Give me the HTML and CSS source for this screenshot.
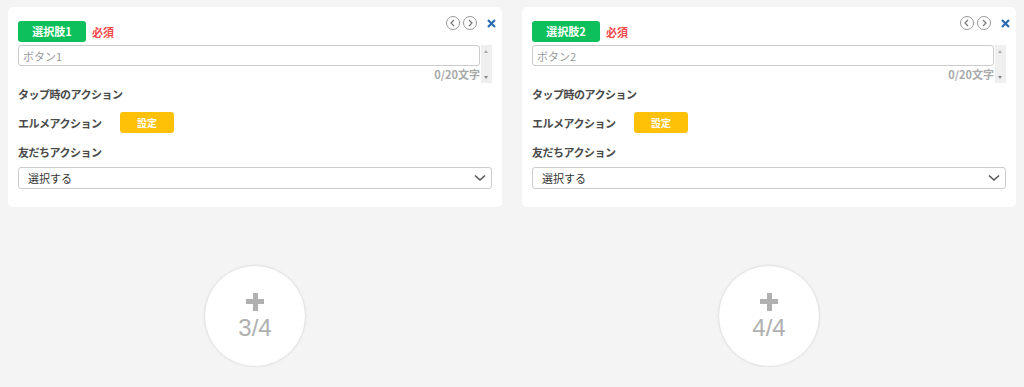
FILE: index.html
```html
<!DOCTYPE html>
<html lang="ja">
<head>
    <meta charset="UTF-8">
    <meta name="viewport" content="width=device-width, initial-scale=1.0">
    <title>選択肢ボタン</title>
    <link rel="stylesheet" href="styles.css">
</head>
<body>
    <div class="columns">
        <!-- Choice 1 -->
        <div class="column">
            <div class="card">
                <div class="tools">
                    <span class="nav-btn">
                        <svg width="10" height="10" viewBox="0 0 10 10"><path d="M6 2 L3 5 L6 8" fill="none" stroke="#777" stroke-width="1.2"/></svg>
                    </span>
                    <span class="nav-btn">
                        <svg width="10" height="10" viewBox="0 0 10 10"><path d="M4 2 L7 5 L4 8" fill="none" stroke="#777" stroke-width="1.2"/></svg>
                    </span>
                    <span class="close-btn">
                        <svg width="9" height="9" viewBox="0 0 9 9"><path d="M1 1 L8 8 M8 1 L1 8" stroke="#2b6cb0" stroke-width="2.2"/></svg>
                    </span>
                </div>
                <div class="badge-row">
                    <span class="badge">選択肢1</span>
                    <span class="required">必須</span>
                </div>
                <div class="text-row">
                    <div class="text-main">
                        <input class="text-input" type="text" placeholder="ボタン1">
                        <div class="counter">0/20文字</div>
                    </div>
                    <div class="scroll">
                        <span class="arrow-up"></span>
                        <span class="arrow-down"></span>
                    </div>
                </div>
                <div class="label label-tap">タップ時のアクション</div>
                <div class="action-row">
                    <span class="label action-name">エルメアクション</span>
                    <button class="set-btn">設定</button>
                </div>
                <div class="label label-friend">友だちアクション</div>
                <div class="select">
                    <span>選択する</span>
                    <svg width="12" height="8" viewBox="0 0 12 8"><path d="M1 1.5 L6 6 L11 1.5" fill="none" stroke="#555" stroke-width="1.6"/></svg>
                </div>
            </div>
            <div class="add-circle">
                <span class="plus"></span>
                <span class="count">3/4</span>
            </div>
        </div>

        <!-- Choice 2 -->
        <div class="column">
            <div class="card">
                <div class="tools">
                    <span class="nav-btn">
                        <svg width="10" height="10" viewBox="0 0 10 10"><path d="M6 2 L3 5 L6 8" fill="none" stroke="#777" stroke-width="1.2"/></svg>
                    </span>
                    <span class="nav-btn">
                        <svg width="10" height="10" viewBox="0 0 10 10"><path d="M4 2 L7 5 L4 8" fill="none" stroke="#777" stroke-width="1.2"/></svg>
                    </span>
                    <span class="close-btn">
                        <svg width="9" height="9" viewBox="0 0 9 9"><path d="M1 1 L8 8 M8 1 L1 8" stroke="#2b6cb0" stroke-width="2.2"/></svg>
                    </span>
                </div>
                <div class="badge-row">
                    <span class="badge">選択肢2</span>
                    <span class="required">必須</span>
                </div>
                <div class="text-row">
                    <div class="text-main">
                        <input class="text-input" type="text" placeholder="ボタン2">
                        <div class="counter">0/20文字</div>
                    </div>
                    <div class="scroll">
                        <span class="arrow-up"></span>
                        <span class="arrow-down"></span>
                    </div>
                </div>
                <div class="label label-tap">タップ時のアクション</div>
                <div class="action-row">
                    <span class="label action-name">エルメアクション</span>
                    <button class="set-btn">設定</button>
                </div>
                <div class="label label-friend">友だちアクション</div>
                <div class="select">
                    <span>選択する</span>
                    <svg width="12" height="8" viewBox="0 0 12 8"><path d="M1 1.5 L6 6 L11 1.5" fill="none" stroke="#555" stroke-width="1.6"/></svg>
                </div>
            </div>
            <div class="add-circle">
                <span class="plus"></span>
                <span class="count">4/4</span>
            </div>
        </div>
    </div>
</body>
</html>
```

FILE: styles.css
```css
/* Choice editor */
body {
    margin: 0;
    padding: 7px 8px 0 8px;
    background-color: #f4f4f4;
    font-family: "Noto Sans CJK JP", "Noto Sans", sans-serif;
    color: #444;
}
.columns {
    display: grid;
    grid-template-columns: 494px 494px;
    column-gap: 20px;
}
.column {
    display: flex;
    flex-direction: column;
    align-items: center;
}
.card {
    position: relative;
    box-sizing: border-box;
    width: 100%;
    background-color: #fff;
    border-radius: 5px;
    padding: 14px 10px 18px 10px;
}
.tools {
    position: absolute;
    top: 9px;
    right: 6px;
    display: flex;
    align-items: center;
    gap: 3px;
}
.nav-btn {
    box-sizing: border-box;
    width: 14px;
    height: 14px;
    border: 1px solid #999;
    border-radius: 50%;
    display: flex;
    align-items: center;
    justify-content: center;
}
.close-btn {
    display: flex;
    margin-left: 7px;
}
.badge-row {
    display: flex;
    align-items: center;
    height: 21px;
}
.badge {
    width: 68px;
    height: 21px;
    line-height: 21px;
    border-radius: 3px;
    background-color: #0ec05c;
    color: #fff;
    font-size: 11px;
    font-weight: bold;
    text-align: center;
}
.required {
    margin-left: 6px;
    color: #f04a4a;
    font-size: 11px;
    font-weight: bold;
}
.text-row {
    display: flex;
    margin-top: 3px;
    gap: 1px;
}
.text-main {
    flex: 1;
}
.text-input {
    box-sizing: border-box;
    display: block;
    width: 100%;
    height: 21px;
    margin: 0;
    padding: 0 4px;
    border: 1px solid #ccc;
    border-radius: 3px;
    font-family: inherit;
    font-size: 11px;
    outline: none;
}
.text-input::placeholder {
    color: #999;
}
.counter {
    height: 17px;
    line-height: 17px;
    text-align: right;
    font-size: 11px;
    font-weight: bold;
    color: #aaa;
}
.scroll {
    position: relative;
    width: 11px;
    height: 38px;
    background-color: #efefef;
}
.arrow-up,
.arrow-down {
    position: absolute;
    left: 3px;
    width: 0;
    height: 0;
    border-left: 2.5px solid transparent;
    border-right: 2.5px solid transparent;
}
.arrow-up {
    top: 5px;
    border-bottom: 3px solid #aaa;
}
.arrow-down {
    bottom: 4px;
    border-top: 3px solid #888;
}
.label {
    font-size: 11px;
    font-weight: bold;
    line-height: 16px;
    letter-spacing: -0.5px;
    color: #4a4a4a;
}
.label-tap {
    margin-top: 3px;
}
.action-row {
    display: flex;
    align-items: center;
    margin-top: 10px;
    height: 21px;
}
.action-name {
    width: 102px;
}
.set-btn {
    width: 54px;
    height: 21px;
    padding: 0;
    border: none;
    border-radius: 3px;
    background-color: #ffc107;
    color: #fff;
    font-family: inherit;
    font-size: 10px;
    font-weight: bold;
}
.label-friend {
    margin-top: 11px;
}
.select {
    box-sizing: border-box;
    display: flex;
    align-items: center;
    justify-content: space-between;
    height: 22px;
    margin-top: 7px;
    padding: 0 5px 0 9px;
    border: 1px solid #ccc;
    border-radius: 3px;
    font-size: 11px;
    color: #333;
}
.add-circle {
    box-sizing: border-box;
    width: 102px;
    height: 102px;
    margin-top: 58px;
    border-radius: 50%;
    background-color: #fff;
    border: 1px solid #e4e4e4;
    box-shadow: 0 0 3px rgba(0,0,0,0.06);
    display: flex;
    flex-direction: column;
    align-items: center;
    justify-content: center;
}
.plus {
    position: relative;
    width: 18px;
    height: 18px;
    margin-top: 2px;
}
.plus::before,
.plus::after {
    content: "";
    position: absolute;
    background-color: #b0b0b0;
}
.plus::before {
    left: 0;
    top: 6.5px;
    width: 18px;
    height: 5px;
}
.plus::after {
    left: 6.5px;
    top: 0;
    width: 5px;
    height: 18px;
}
.count {
    margin-top: 3px;
    font-family: "Liberation Sans", Arial, sans-serif;
    font-size: 24px;
    line-height: 28px;
    color: #b0b0b0;
}
```
